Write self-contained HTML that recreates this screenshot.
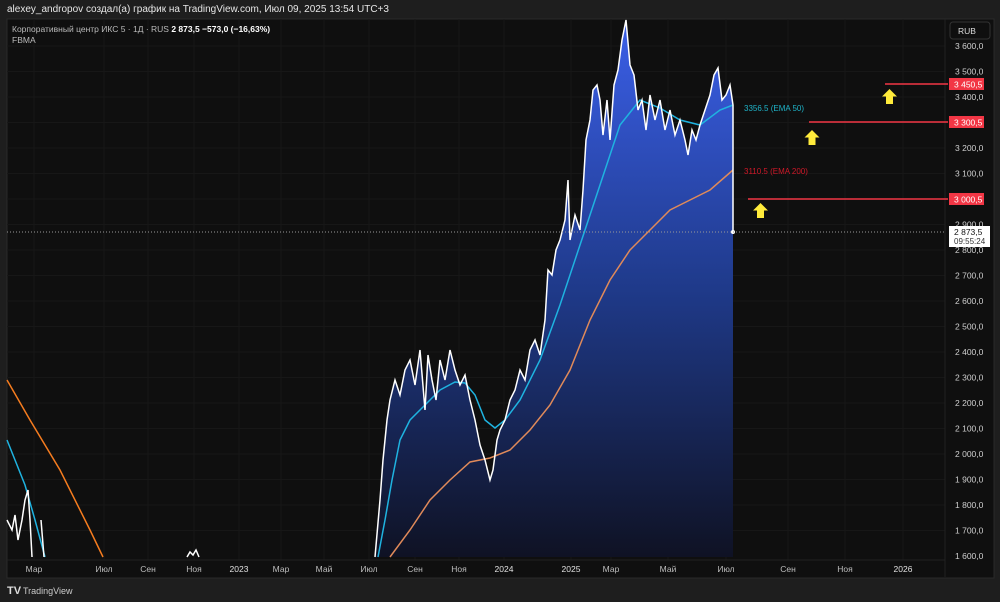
<!DOCTYPE html>
<html><head><meta charset="utf-8"><style>
html,body{margin:0;padding:0;background:#1e1e1e;width:1000px;height:602px;overflow:hidden;font-family:"Liberation Sans","Noto Sans CJK SC",sans-serif}
</style></head><body>
<svg width="1000" height="602" xmlns="http://www.w3.org/2000/svg" font-family="Liberation Sans, sans-serif">
<defs>
<linearGradient id="fill" gradientUnits="userSpaceOnUse" x1="0" y1="20" x2="0" y2="557">
<stop offset="0" stop-color="#3b5fe8"/><stop offset="0.5" stop-color="#1f3a8a"/><stop offset="1" stop-color="#0f1224"/>
</linearGradient>
</defs>
<rect width="1000" height="602" fill="#1e1e1e"/>
<text x="7" y="12" fill="#e6e6e6" font-size="10">alexey_andropov создал(а) график на TradingView.com, Июл 09, 2025 13:54 UTC+3</text>
<rect x="7" y="19" width="987" height="559" fill="#0f0f0f" stroke="#2a2a2a"/>
<g stroke="#171717" stroke-width="1">
<line x1="7" x2="945" y1="46" y2="46"/><line x1="7" x2="945" y1="71.5" y2="71.5"/><line x1="7" x2="945" y1="97" y2="97"/><line x1="7" x2="945" y1="122.5" y2="122.5"/><line x1="7" x2="945" y1="148" y2="148"/><line x1="7" x2="945" y1="173.5" y2="173.5"/><line x1="7" x2="945" y1="199" y2="199"/><line x1="7" x2="945" y1="224.5" y2="224.5"/><line x1="7" x2="945" y1="250" y2="250"/><line x1="7" x2="945" y1="275.5" y2="275.5"/><line x1="7" x2="945" y1="301" y2="301"/><line x1="7" x2="945" y1="326.5" y2="326.5"/><line x1="7" x2="945" y1="352" y2="352"/><line x1="7" x2="945" y1="377.5" y2="377.5"/><line x1="7" x2="945" y1="403" y2="403"/><line x1="7" x2="945" y1="428.5" y2="428.5"/><line x1="7" x2="945" y1="454" y2="454"/><line x1="7" x2="945" y1="479.5" y2="479.5"/><line x1="7" x2="945" y1="505" y2="505"/><line x1="7" x2="945" y1="530.5" y2="530.5"/>
<line y1="19" y2="560" x1="34" x2="34"/><line y1="19" y2="560" x1="104" x2="104"/><line y1="19" y2="560" x1="148" x2="148"/><line y1="19" y2="560" x1="194" x2="194"/><line y1="19" y2="560" x1="239" x2="239"/><line y1="19" y2="560" x1="281" x2="281"/><line y1="19" y2="560" x1="324" x2="324"/><line y1="19" y2="560" x1="369" x2="369"/><line y1="19" y2="560" x1="415" x2="415"/><line y1="19" y2="560" x1="459" x2="459"/><line y1="19" y2="560" x1="504" x2="504"/><line y1="19" y2="560" x1="571" x2="571"/><line y1="19" y2="560" x1="611" x2="611"/><line y1="19" y2="560" x1="668" x2="668"/><line y1="19" y2="560" x1="726" x2="726"/><line y1="19" y2="560" x1="788" x2="788"/><line y1="19" y2="560" x1="845" x2="845"/><line y1="19" y2="560" x1="903" x2="903"/>
</g>
<line x1="7" x2="945" y1="560" y2="560" stroke="#222"/>
<line x1="945" x2="945" y1="19" y2="577" stroke="#222"/>
<polygon fill="url(#fill)" points="375,557 380,500 383,460 387,420 390,400 395,380 400,395 405,370 410,360 415,385 420,350 425,410 428,355 432,380 436,400 440,360 445,380 450,350 455,370 460,385 465,375 470,400 475,420 480,445 485,460 490,480 493,470 497,440 500,430 505,420 510,400 515,390 520,370 525,380 530,350 535,340 540,355 545,320 548,270 552,275 556,250 560,240 565,220 568,180 570,240 575,215 580,230 583,190 586,140 590,120 593,90 597,85 600,100 603,135 607,100 610,140 614,85 618,70 622,40 626,20 630,65 634,75 638,110 642,100 646,130 650,95 655,120 660,100 665,130 670,110 675,135 680,120 685,140 688,155 692,130 696,140 700,125 705,110 710,95 714,75 718,68 722,100 726,95 730,85 733,105 733,557"/>
<polyline fill="none" stroke="#f57c1f" stroke-width="1.5" points="7,380 30,420 60,470 90,530 103,557"/>
<polyline fill="none" stroke="#e08a5a" stroke-width="1.5" points="390,557 410,530 430,500 450,480 470,462 490,458 510,450 530,430 550,405 570,370 590,320 610,280 630,250 650,230 670,210 690,200 710,190 733,170"/>
<polyline fill="none" stroke="#1fb3e0" stroke-width="1.5" points="7,440 15,460 25,485 35,520 45,557"/>
<polyline fill="none" stroke="#1fb3e0" stroke-width="1.5" points="378,557 385,520 392,480 400,440 410,420 425,405 440,390 455,382 465,383 475,395 485,420 495,428 505,420 520,400 540,360 560,305 580,245 600,185 620,125 640,100 660,108 680,120 700,125 720,110 733,105"/>
<polyline fill="none" stroke="#fff" stroke-width="1.5" points="7,520 12,530 15,515 18,540 22,520 25,500 28,490 30,520 32,557"/>
<polyline fill="none" stroke="#fff" stroke-width="1.5" points="41,520 44,557"/>
<polyline fill="none" stroke="#fff" stroke-width="1.5" points="187,557 190,552 193,555 196,550 199,557"/>
<polyline fill="none" stroke="#fff" stroke-width="1.5" points="375,557 380,500 383,460 387,420 390,400 395,380 400,395 405,370 410,360 415,385 420,350 425,410 428,355 432,380 436,400 440,360 445,380 450,350 455,370 460,385 465,375 470,400 475,420 480,445 485,460 490,480 493,470 497,440 500,430 505,420 510,400 515,390 520,370 525,380 530,350 535,340 540,355 545,320 548,270 552,275 556,250 560,240 565,220 568,180 570,240 575,215 580,230 583,190 586,140 590,120 593,90 597,85 600,100 603,135 607,100 610,140 614,85 618,70 622,40 626,20 630,65 634,75 638,110 642,100 646,130 650,95 655,120 660,100 665,130 670,110 675,135 680,120 685,140 688,155 692,130 696,140 700,125 705,110 710,95 714,75 718,68 722,100 726,95 730,85 733,105 733,232"/>
<circle cx="733" cy="232" r="2" fill="#fff"/>
<line x1="7" x2="945" y1="232" y2="232" stroke="#999" stroke-dasharray="1,2"/>
<line x1="885" x2="948" y1="84" y2="84" stroke="#f23645" stroke-width="1.5"/>
<line x1="809" x2="948" y1="122" y2="122" stroke="#f23645" stroke-width="1.5"/>
<line x1="748" x2="948" y1="199" y2="199" stroke="#f23645" stroke-width="1.5"/>
<g fill="#ffeb3b"><path d="M889.5,89 L897,96.5 L893,96.5 L893,104 L886,104 L886,96.5 L882,96.5 Z"/><path d="M812,130 L819.5,137.5 L815.5,137.5 L815.5,145 L808.5,145 L808.5,137.5 L804.5,137.5 Z"/><path d="M760.5,203 L768,210.5 L764,210.5 L764,218 L757,218 L757,210.5 L753,210.5 Z"/></g>
<text x="744" y="111" fill="#1fb3c8" font-size="8">3356.5 (EMA 50)</text>
<text x="744" y="174" fill="#d01828" font-size="8">3110.5 (EMA 200)</text>
<g fill="#cfcfcf" font-size="8.5" text-anchor="start">
<text x="955" y="49">3 600,0</text><text x="955" y="74.5">3 500,0</text><text x="955" y="100">3 400,0</text><text x="955" y="151">3 200,0</text><text x="955" y="176.5">3 100,0</text><text x="955" y="227.5">2 900,0</text><text x="955" y="253">2 800,0</text><text x="955" y="278.5">2 700,0</text><text x="955" y="304">2 600,0</text><text x="955" y="329.5">2 500,0</text><text x="955" y="355">2 400,0</text><text x="955" y="380.5">2 300,0</text><text x="955" y="406">2 200,0</text><text x="955" y="431.5">2 100,0</text><text x="955" y="457">2 000,0</text><text x="955" y="482.5">1 900,0</text><text x="955" y="508">1 800,0</text><text x="955" y="533.5">1 700,0</text><text x="955" y="559">1 600,0</text>
</g>
<rect x="950" y="22" width="40" height="17" rx="3" fill="#0f0f0f" stroke="#333"/>
<text x="958" y="34" fill="#ddd" font-size="8.5">RUB</text>
<rect x="949" y="78" width="35" height="12" fill="#f23645"/><text x="954" y="87.5" fill="#fff" font-size="8.5">3 450,5</text>
<rect x="949" y="116" width="35" height="12" fill="#f23645"/><text x="954" y="125.5" fill="#fff" font-size="8.5">3 300,5</text>
<rect x="949" y="193" width="35" height="12" fill="#f23645"/><text x="954" y="202.5" fill="#fff" font-size="8.5">3 000,5</text>
<rect x="949" y="226" width="41" height="21" fill="#fff"/><text x="954" y="235" fill="#111" font-size="8.5">2 873,5</text><text x="954" y="244" fill="#333" font-size="8">09:55:24</text>
<g fill="#bdbdbd" font-size="8.5" text-anchor="middle">
<text x="34" y="572">Мар</text><text x="104" y="572">Июл</text><text x="148" y="572">Сен</text><text x="194" y="572">Ноя</text><text x="239" y="572" fill="#e0e0e0">2023</text><text x="281" y="572">Мар</text><text x="324" y="572">Май</text><text x="369" y="572">Июл</text><text x="415" y="572">Сен</text><text x="459" y="572">Ноя</text><text x="504" y="572" fill="#e0e0e0">2024</text><text x="571" y="572" fill="#e0e0e0">2025</text><text x="611" y="572">Мар</text><text x="668" y="572">Май</text><text x="726" y="572">Июл</text><text x="788" y="572">Сен</text><text x="845" y="572">Ноя</text><text x="903" y="572" fill="#e0e0e0">2026</text>
</g>
<text x="12" y="32" fill="#bbb" font-size="8.5">Корпоративный центр ИКС 5 · 1Д · RUS <tspan fill="#fff" font-weight="bold">2 873,5  −573,0 (−16,63%)</tspan></text>
<text x="12" y="43" fill="#bbb" font-size="8.5">FBMA</text>
<text x="7" y="594" fill="#ddd" font-size="11" font-weight="bold">TV</text>
<text x="23" y="594" fill="#ccc" font-size="9">TradingView</text>
</svg>
</body></html>
